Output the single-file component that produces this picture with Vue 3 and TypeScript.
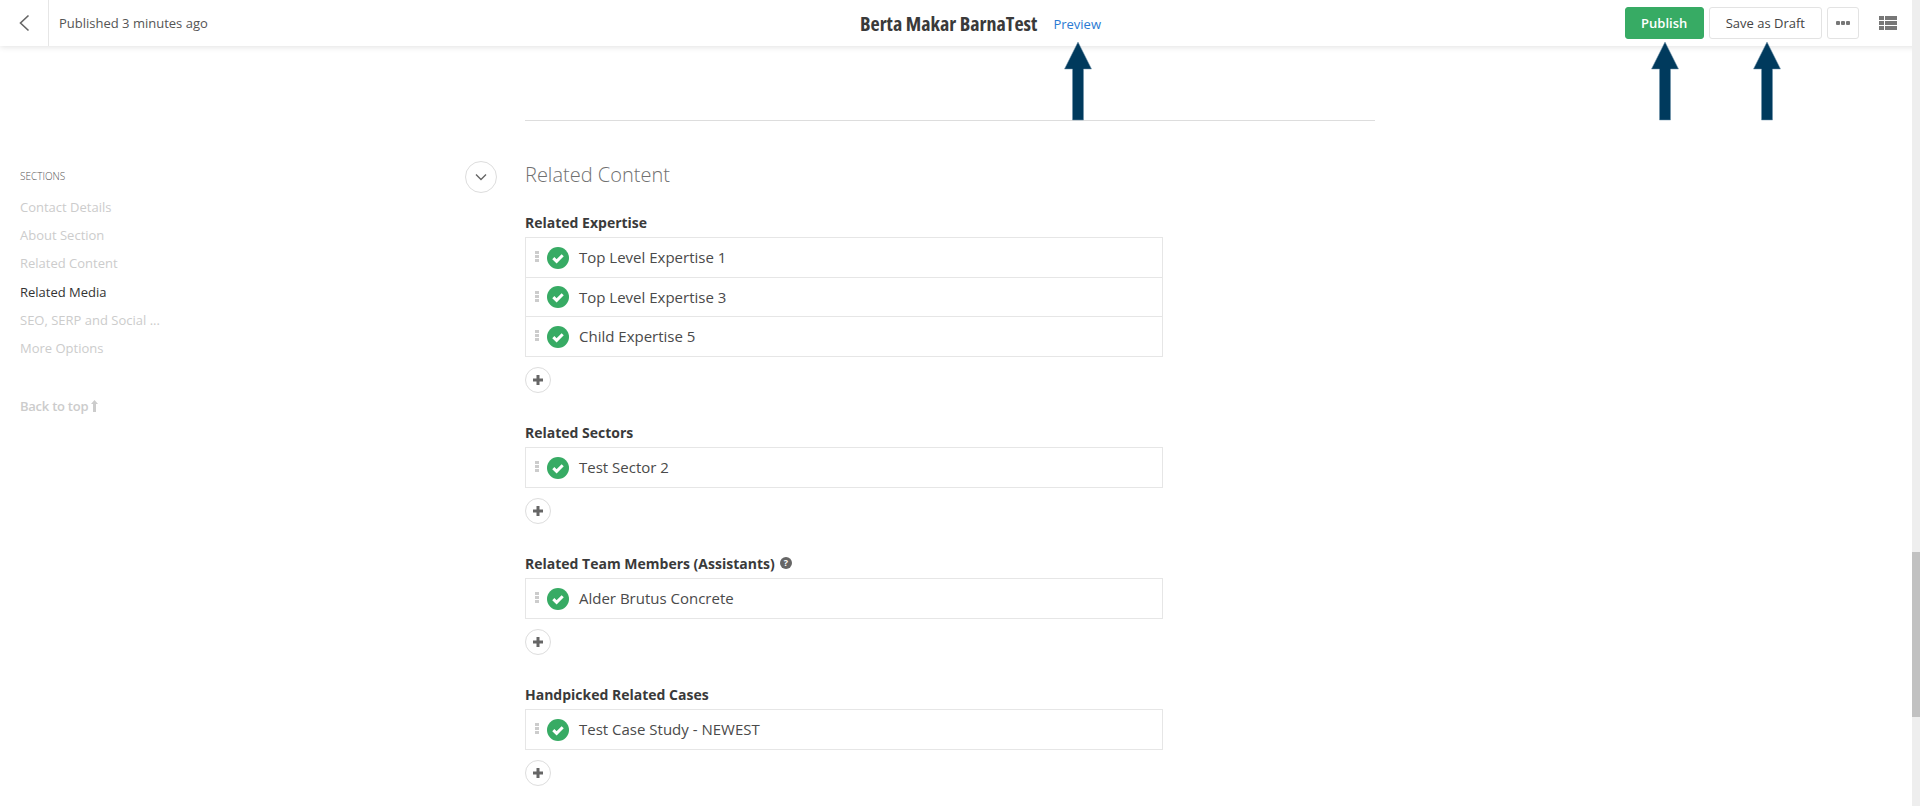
<script setup lang="ts">
interface Block {
  label: string
  help?: boolean
  items: string[]
}

const nav = [
  { text: 'Contact Details', active: false },
  { text: 'About Section', active: false },
  { text: 'Related Content', active: false },
  { text: 'Related Media', active: true },
  { text: 'SEO, SERP and Social ...', active: false },
  { text: 'More Options', active: false },
]

const blocks: Block[] = [
  { label: 'Related Expertise', items: ['Top Level Expertise 1', 'Top Level Expertise 3', 'Child Expertise 5'] },
  { label: 'Related Sectors', items: ['Test Sector 2'] },
  { label: 'Related Team Members (Assistants)', help: true, items: ['Alder Brutus Concrete'] },
  { label: 'Handpicked Related Cases', items: ['Test Case Study - NEWEST'] },
]

const arrows = [1078, 1665, 1767]
</script>

<template>
  <div class="page">
    <header class="topbar">
      <div class="left">
        <div class="back">
          <svg width="12" height="18" viewBox="0 0 12 18"><path d="M10.5 1.5 2.5 9l8 7.5" fill="none" stroke="#666" stroke-width="1.6" /></svg>
        </div>
        <span class="status">Published 3 minutes ago</span>
      </div>
      <div class="center">
        <span class="title">Berta Makar BarnaTest</span>
        <a class="preview">Preview</a>
      </div>
      <div class="actions">
        <button class="btn primary">Publish</button>
        <button class="btn">Save as Draft</button>
        <button class="btn more" aria-label="More">
          <svg width="14" height="4" viewBox="0 0 14 4"><g fill="#777"><rect width="4" height="4" rx="1" /><rect x="5" width="4" height="4" rx="1" /><rect x="10" width="4" height="4" rx="1" /></g></svg>
        </button>
        <svg class="list-icon" width="18" height="14" viewBox="0 0 18 14"><g fill="#777"><rect width="5" height="4" /><rect x="6" width="12" height="4" /><rect y="5" width="5" height="4" /><rect x="6" y="5" width="12" height="4" /><rect y="10" width="5" height="4" /><rect x="6" y="10" width="12" height="4" /></g></svg>
      </div>
    </header>

    <div class="body">
      <aside class="sidebar">
        <div class="nav-title">SECTIONS</div>
        <ul class="nav">
          <li v-for="n in nav" :key="n.text" :class="{ active: n.active }">{{ n.text }}</li>
        </ul>
        <div class="to-top">Back to top
          <svg width="7" height="12" viewBox="0 0 7 12"><path d="M3.500 0 7 4H5v8H2V4H0z" fill="#ccc" /></svg>
        </div>
      </aside>
      <div class="toggle-col">
        <div class="toggle">
          <svg width="12" height="8" viewBox="0 0 12 8"><path d="M1 1.500 6 6.500l5-5" fill="none" stroke="#666" stroke-width="1.400" /></svg>
        </div>
      </div>
      <main class="content">
        <h2 class="heading">Related Content</h2>
        <section v-for="b in blocks" :key="b.label" class="block">
          <div class="label">
            {{ b.label }}
            <svg v-if="b.help" class="help" width="12" height="12" viewBox="0 0 12 12"><circle cx="6" cy="6" r="6" fill="#666" /><text x="6" y="9.300" text-anchor="middle" class="help-q">?</text></svg>
          </div>
          <div class="box">
            <div v-for="it in b.items" :key="it" class="row">
              <span class="grip"><i /><i /><i /></span>
              <svg class="ok" width="22" height="22" viewBox="0 0 22 22"><circle cx="11" cy="11" r="11" fill="#37ab64" /><path d="M6.300 11.200 9.600 14.400 15.700 8.200" fill="none" stroke="#fff" stroke-width="3" /></svg>
              <span class="name">{{ it }}</span>
            </div>
          </div>
          <div class="add">
            <svg width="12" height="12" viewBox="0 0 12 12"><path d="M6 1v10M1 6h10" stroke="#666" stroke-width="3" /></svg>
          </div>
        </section>
      </main>
    </div>

    <svg v-for="x in arrows" :key="x" class="arrow" :style="{ left: x - 14 + 'px' }" width="28" height="79" viewBox="0 0 28 79">
      <path d="M14 0 27.500 27H19.500V78H8.500V27H.5z" fill="#003a5d" stroke="#6f93aa" stroke-width=".5" />
    </svg>

    <div class="scrollbar"><div class="thumb" /></div>
  </div>
</template>

<style>
html, body { margin: 0; overflow: hidden; background: #fff; }
</style>

<style scoped>
.page {
  position: relative;
  height: 806px;
  overflow: hidden;
  font-family: "Open Sans", "Liberation Sans", sans-serif;
  color: #444;
  background: #fff;
}
.topbar {
  position: relative;
  height: 46px;
  display: flex;
  align-items: center;
  justify-content: space-between;
  padding-right: 23px;
  background: #fff;
  box-shadow: 0 1px 6px rgba(0, 0, 0, .12);
}
.left { display: flex; align-items: center; height: 100%; }
.back {
  height: 100%;
  display: flex;
  align-items: center;
  justify-content: center;
  border-right: 1px solid #e6e6e6;
  box-sizing: border-box;
  width: 49px;
}
.status { margin-left: 10px; font-size: 13px; color: #555; }
.center {
  position: absolute;
  left: 860px;
  top: 0;
  height: 46px;
  display: flex;
  align-items: center;
  white-space: nowrap;
}
.title {
  font-size: 20px;
  font-weight: 700;
  font-stretch: 75%;
  color: #3a3a3a;
}
.preview { margin: 2px 0 0 16px; font-size: 13px; color: #2a7ad3; }
.actions { display: flex; align-items: center; gap: 5px; }
.btn {
  height: 32px;
  padding: 0 16px;
  border: 1px solid #e3e3e3;
  border-radius: 3px;
  background: #fff;
  font: 400 13px "Open Sans", sans-serif;
  color: #444;
}
.btn.primary {
  width: 79px;
  padding: 0;
  background: #37ab64;
  border-color: #37ab64;
  color: #fff;
  font-weight: 600;
}
.btn.more {
  width: 32px;
  padding: 0;
  display: flex;
  align-items: center;
  justify-content: center;
}
.list-icon { margin-left: 15px; }
.body {
  display: flex;
  padding-top: 74px;
}
.sidebar {
  width: 445px;
  padding: 49px 0 0 20px;
  flex: none;
}
.nav-title { font-size: 10px; font-weight: 300; line-height: 14px; color: #555; }
.nav {
  list-style: none;
  margin: 10px 0 0;
  padding: 0;
  font-size: 13px;
  color: #ccc;
}
.nav li { height: 28.2px; line-height: 28.2px; }
.nav li.active { color: #333; }
.to-top {
  margin-top: 35px;
  display: flex;
  align-items: center;
  gap: 3px;
  font-size: 13px;
  font-weight: 600;
  letter-spacing: -.25px;
  color: #ccc;
}
.toggle-col { width: 60px; flex: none; padding-top: 41px; }
.toggle {
  width: 32px;
  height: 32px;
  box-sizing: border-box;
  border: 1px solid #ddd;
  border-radius: 50%;
  display: flex;
  align-items: center;
  justify-content: center;
}
.content {
  width: 850px;
  flex: none;
  border-top: 1px solid #ddd;
  padding-top: 40px;
}
.heading {
  margin: 0 0 23px;
  font-size: 20px;
  font-weight: 300;
  line-height: 28px;
  color: #707070;
}
.block { margin-bottom: 29px; width: 638px; }
.label {
  display: flex;
  align-items: center;
  gap: 5px;
  height: 20px;
  margin-bottom: 5px;
  font-size: 14px;
  font-weight: 700;
  color: #3a3a3a;
}
.help-q { font: 700 9px "Open Sans", sans-serif; fill: #fff; }
.box { border: 1px solid #e6e6e6; }
.row {
  display: flex;
  align-items: center;
  height: 39px;
  padding-left: 9px;
  font-size: 15px;
  color: #4a4a4a;
  border-top: 1px solid #e6e6e6;
}
.row:first-child { border-top: 0; }
.row:nth-child(2) { height: 38px; }
.grip {
  display: flex;
  flex-direction: column;
  gap: 1px;
  width: 4px;
  margin-bottom: 2px;
}
.grip i { display: block; width: 4px; height: 3px; background: #ccc; }
.ok { margin-left: 8px; }
.name { margin: 0 0 1px 10px; }
.add {
  margin-top: 10px;
  width: 26px;
  height: 26px;
  box-sizing: border-box;
  border: 1px solid #ddd;
  border-radius: 50%;
  display: flex;
  align-items: center;
  justify-content: center;
}
.arrow { position: absolute; top: 42px; }
.scrollbar {
  position: absolute;
  top: 0;
  right: 0;
  width: 8px;
  height: 100%;
  background: #eee;
}
.thumb {
  position: absolute;
  top: 552px;
  width: 8px;
  height: 165px;
  background: #c1c1c1;
}
</style>
